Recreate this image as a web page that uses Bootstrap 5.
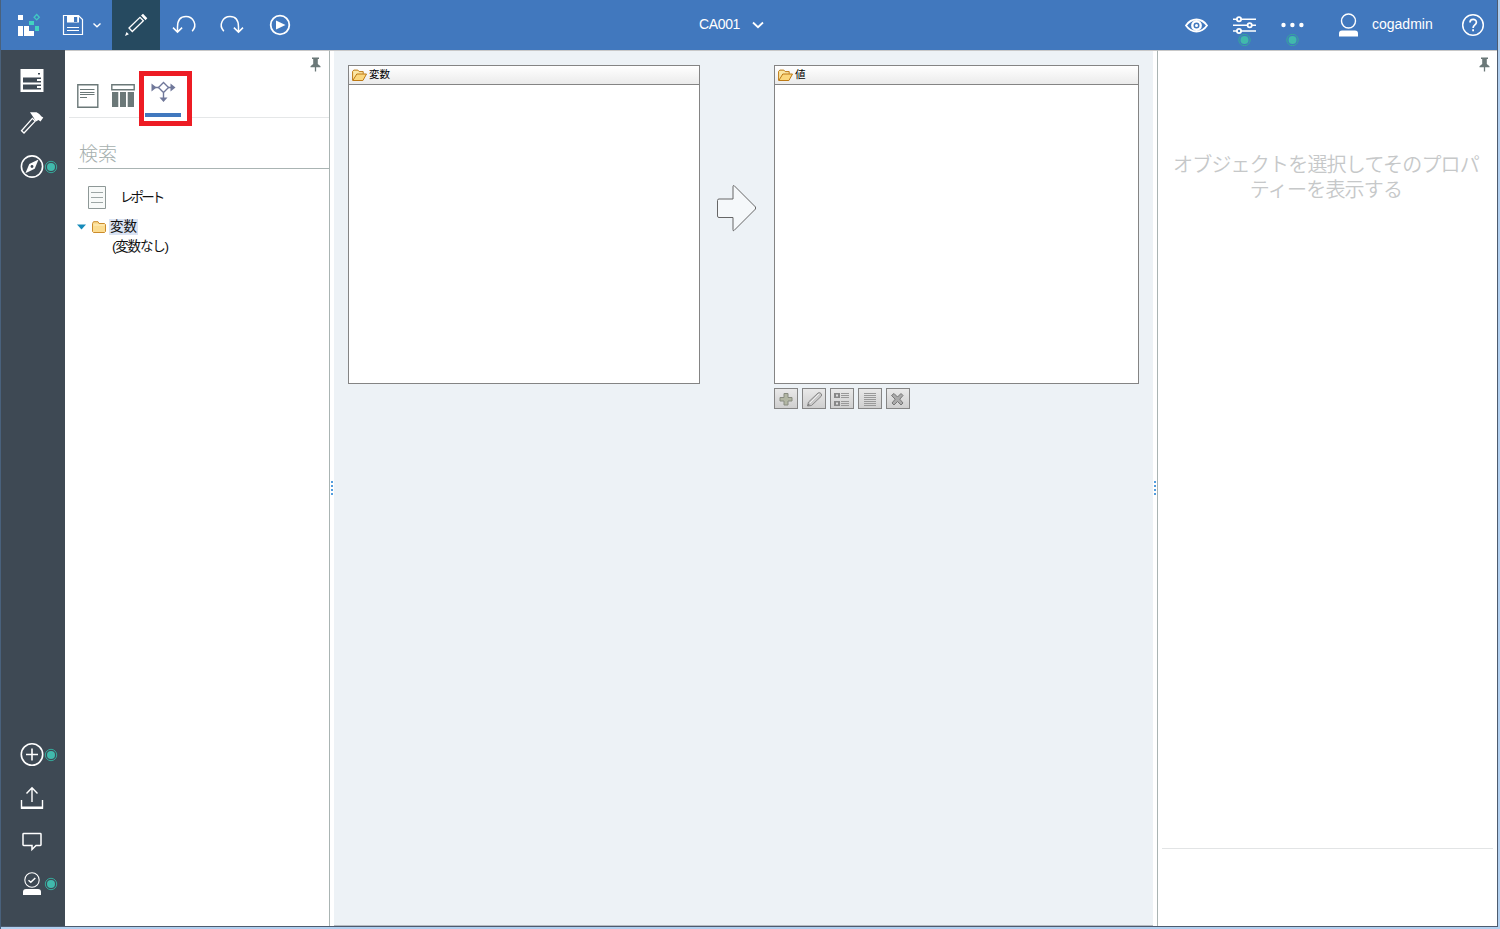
<!DOCTYPE html>
<html lang="ja">
<head>
<meta charset="utf-8">
<title>CA001</title>
<link href="https://cdn.jsdelivr.net/npm/bootstrap@5.3.0/dist/css/bootstrap.min.css" rel="stylesheet">
<style>
body{font-family:"Liberation Sans","Noto Sans CJK JP",sans-serif;font-size:14px;width:1500px;height:929px;overflow:hidden;background:#b2d0f0;border-left:1px solid #49617c;line-height:1.2}
svg{display:block;flex:none;fill:none}
.window{width:1497px;height:927px;border-right:1px solid #4e5b6e;border-bottom:1px solid #4e5b6e;background:#fff}
.topbar{height:50px;background:#4178be;color:#fff;flex:none}
.tool{width:48px;height:50px;flex:none;padding:0;border:0;background:none}
.tool.logo{width:47px}.tool.save{width:64px}
.tool.active{background:#264a60}
.rail{width:64px;padding:9px 0 21px;background:#3e4954;flex:none}
.side-left{width:265px;border-right:1px solid #aab4b3;border-top:1px solid #c8c8c8;flex:none}
.splitter{width:4px;border-top:1px solid #c8c8c8;flex:none}
.canvas-area{width:819px;background:#edf2f6;border-top:1px solid #c8c8c8;border-bottom:1px solid #b7bcc3;padding:14px 14px 0;flex:none}
.side-right{width:340px;border-left:1px solid #aab4b3;border-top:1px solid #c8c8c8;flex:none}
.tabs-row{height:47px;margin-left:4px;border-bottom:1px solid #e5e7e8;padding-left:8px}
.marked{width:53px;height:55px;border:5px solid #ed1c24;margin:0 0 0 4px;flex:none;background:#fff;position:relative;z-index:1}
.search{height:51px;margin-left:13px;border-bottom:1px solid #aab4b3;font-size:19px;font-weight:300;color:#a5afae;line-height:28px;padding:23px 0 0 1px}
.tree{color:#111;font-size:13.5px}
.picked{background:#dae3f3;height:16px;line-height:15px;width:29px;padding-left:1px}
.panel-box{height:319px;border:1px solid #848484;background:#fff}
.panel-head{height:19px;border-bottom:1px solid #848484;background:linear-gradient(#fff,#ebebeb);font-size:10.5px;line-height:16px;color:#000;padding-left:3px}
.mini{width:24px;height:21px;padding:0;border:1px solid #858585;background:linear-gradient(#e9e9e9,#cfcfcf)}
.hint{font-size:20px;font-weight:350;line-height:25px;color:#c6c8c9;letter-spacing:-.8px;margin:81px 3px 0 0;white-space:nowrap}
.footer-rule{height:1px;background:#e2e4e5;margin:0 4px 77px}
</style>
</head>
<body>
<svg width="0" height="0" class="position-absolute">
<defs>
<g id="dot"><circle r="5.7" stroke="#35a99b" stroke-width="1"/><circle r="4" fill="#41b9ac"/></g>
<g id="pin"><path d="M2 .5h7v1.500H7.800V7l2.700 2.300v1H.5v-1L3.200 7V2H2z" fill="#6b7878"/><path d="M5.500 10v4.500" stroke="#6b7878" stroke-width="1.3"/></g>
<g id="openfolder"><path d="M.6 11.4V2.4l1.2-1.3h4l1.4 1.5h4v2.2" fill="#fbe7a5" stroke="#bd7914"/><path d="M.8 11.5 4.8 5h9.7l-3.6 6.5z" fill="#fbd77d" stroke="#bd7914"/></g>
</defs>
</svg>
<div class="window d-flex flex-column">
<header class="topbar d-flex align-items-center">
<button class="tool logo"><svg width="47" height="50"><path d="M17 15h5v5h-5zM17 26h5v10h-5zM23 26h5v10h-5zM28 31h5v5h-5z" fill="#fff"/><path d="M28 21h5v4h-5zM34 26h4v5h-4z" fill="#42d3c1"/><path d="m35.7 14.5 2.6 2.7-2.6 2.7-2.6-2.7z" stroke="#42c8c4" stroke-width="1.3"/></svg></button>
<button class="tool save"><svg width="64" height="50"><path d="M15.5 15.5h15l4 4v15h-19z" stroke="#fff" stroke-width="1.2"/><path d="M19 15.5h12v7H19z" fill="#fff"/><path d="M26 17h3.2v5H26z" fill="#4178be"/><path d="M19 27.5h12M19 30.5h12" stroke="#fff"/><path d="m45.5 23.5 3.5 3.2 3.500-3.2" stroke="#fff" stroke-width="1.4"/></svg></button>
<button class="tool active"><svg width="48" height="50"><path d="m17 28 11-10.700 3.400 3.400L20.300 31.500z" stroke="#fff" stroke-width="1.3"/><path d="m29 15.500 2-1.700 4.300 4.500-1.800 2zM13 36l1.500-4 2.400 2.300z" fill="#fff"/></svg></button>
<button class="tool"><svg width="48" height="50"><path d="M32.200 31.200C38 25 33 16.500 26 16.500s-8.500 5-8.500 10.500v5M13 27.600l4.500 4.500 4.600-4.500" stroke="#fff" stroke-width="1.5"/></svg></button>
<button class="tool"><svg width="48" height="50"><path d="M15.800 31.200C10 25 15 16.500 22 16.500s8.500 5 8.500 10.500v5M25.900 27.600l4.600 4.500 4.500-4.500" stroke="#fff" stroke-width="1.5"/></svg></button>
<button class="tool"><svg width="48" height="50"><circle cx="24" cy="25" r="9.3" stroke="#fff" stroke-width="1.8"/><path d="m20 20.500 9.500 4.500-9.500 4.500z" fill="#fff"/></svg></button>
<div class="d-flex align-items-center flex-grow-1" style="padding-left:395px"><span class="pb-1" style="letter-spacing:-.35px;margin-top:2px">CA001</span><svg width="14" height="10" style="margin-left:11px"><path d="m2 2.500 5 4.700 5-4.700" stroke="#fff" stroke-width="1.8"/></svg></div>
<button class="tool"><svg width="48" height="50"><path d="M14 25.500c5.500-8 15.500-8 21 0-5.500 8-15.500 8-21 0z" stroke="#fff" stroke-width="1.8"/><circle cx="24.500" cy="25.500" r="4.200" stroke="#fff" stroke-width="2.400"/><circle cx="24.500" cy="25.500" r="1.500" fill="#fff"/></svg></button>
<button class="tool"><svg width="48" height="50"><path d="M13 19.200h23M13 25.200h23M13 31h23" stroke="#fff" stroke-width="1.4"/><g fill="#4178be" stroke="#fff" stroke-width="1.8"><circle cx="19" cy="19.200" r="2.100"/><circle cx="29.700" cy="25.200" r="2.100"/><circle cx="19" cy="31" r="2.100"/></g><use href="#dot" x="24.500" y="40"/></svg></button>
<button class="tool"><svg width="48" height="50"><g fill="#fff"><circle cx="15.500" cy="25" r="2.200"/><circle cx="24.400" cy="25" r="2.200"/><circle cx="33.400" cy="25" r="2.200"/></g><use href="#dot" x="24.500" y="40"/></svg></button>
<svg width="56" height="50"><circle cx="32.500" cy="21" r="7" stroke="#fff" stroke-width="1.4"/><path d="M23 36.500v-3q0-3 3-3h13q3 0 3 3v3z" fill="#fff"/></svg>
<span class="pb-1" style="width:77px;margin-top:2px">cogadmin</span>
<button class="tool"><svg width="48" height="50"><circle cx="24" cy="25" r="10.300" stroke="#fff" stroke-width="1.5"/><path d="M21 22.500c0-4 6.400-4 6.400-.3 0 2.700-3.300 2.700-3.300 5.800" stroke="#fff" stroke-width="1.7"/><path d="M23.200 29.300h1.800v2h-1.800z" fill="#fff"/></svg></button>
</header>
<div class="d-flex flex-grow-1">
<nav class="rail d-flex flex-column">
<svg width="64" height="43"><path d="M19.500 10h23v23h-23z" fill="#fff"/><path d="M22 18.500h18v5H22zM22 25.500h18v5H22z" fill="#3e4954"/><path d="M36 20h4v2h-4zM36 27h4v2h-4z" fill="#fff"/><path d="M37 14h2v1.500h-2z" fill="#3e4954"/></svg>
<svg width="64" height="43"><path d="m31.400 16.400 2.800 2.700L23 31l-2.500-2.300z" stroke="#fff" stroke-width="1.3"/><path d="M29 10.300h6.500c2.500 1 4 3 5 4.200l1.800 1-2.800 4-2-1.500-2.600 1.400-2.700-4.300z" fill="#fff"/></svg>
<svg width="64" height="43"><circle cx="31" cy="21.500" r="10.600" stroke="#fff" stroke-width="1.6"/><path d="m37.500 14.500-3.800 9.300-9.300 4.500 3.900-9.400z" fill="#fff"/><circle cx="31" cy="21.500" r="1.400" fill="#3e4954"/><use href="#dot" x="50" y="22"/></svg>
<svg width="64" height="43" class="mt-auto"><circle cx="31" cy="21.500" r="10.700" stroke="#fff" stroke-width="1.6"/><path d="M31 15.500v12M25 21.500h12" stroke="#fff" stroke-width="1.6"/><use href="#dot" x="50" y="22"/></svg>
<svg width="64" height="43"><path d="M31 26V11.800M25.500 17.500l5.500-5.800 5.500 5.800M20.500 24v8h21v-8" stroke="#fff" stroke-width="1.4"/><path d="M20 30.500h22v2.500H20z" fill="#fff"/></svg>
<svg width="64" height="43"><path d="M22.700 14.500h16.600q.7 0 .7.700v10.600q0 .7-.7.700h-4.300l-4 4v-4h-8.300q-.7 0-.7-.7V15.200q0-.7.7-.7z" stroke="#fff" stroke-width="1.5"/></svg>
<svg width="64" height="43"><circle cx="31" cy="18" r="7.200" stroke="#fff" stroke-width="1.1"/><path d="m27.500 18.300 2.300 2 4.500-4.300" stroke="#fff" stroke-width="1.5"/><path d="M22 33v-3q0-3 3-3h12q3 0 3 3v3z" fill="#fff"/><use href="#dot" x="50" y="22"/></svg>
</nav>
<aside class="side-left">
<div class="d-flex justify-content-end" style="height:20px;padding:6px 8px 0 0"><svg width="11" height="15"><use href="#pin"/></svg></div>
<div class="tabs-row d-flex">
<svg width="22" height="25" style="margin-top:12px"><path d="M.8 1.800h20v22.400H.8z" stroke="#6b7878" stroke-width="1.4"/><path d="M3 6.500h14.500M3 9.500h14.500M3 11.500h14.500M3 14.500h7" stroke="#6b7878" stroke-width="1"/></svg>
<svg width="24" height="25" style="margin:12px 0 0 12px"><path d="M.8 1.700h22.400v5H.8z" stroke="#6b7878" stroke-width="1.4"/><path d="M1 9h6.300v15H1zM9 9h6v15H9zM16.700 9h6.300v15h-6.300z" fill="#6b7878"/></svg>
<div class="marked"><svg width="43" height="45"><g stroke="#70789a" stroke-width="1.4"><path d="M10 11.500h5M24 11.500h5M19.500 17v6"/><path d="m19.500 6.500 5 5-5 5-5-5z"/></g><path d="m7.500 7.500 5 4-5 4zM26.500 7.500l5 4-5 4zM15.500 21.500h8l-4 4.500z" fill="#70789a"/><path d="M1 37h36v4H1z" fill="#4178be"/></svg></div>
</div>
<div class="search">検索</div>
<div class="tree">
<div class="d-flex align-items-center" style="height:24px;margin:16px 0 0 23px"><svg width="18" height="23"><path d="M.5.500h17v22H.5z" stroke="#8e9897" fill="#f8faf9"/><path d="M3 6.500h12M3 11.500h12M3 16.500h12" stroke="#9da6a5"/></svg><span style="margin:3px 0 0 14px;letter-spacing:-2.900px">レポート</span></div>
<div class="d-flex align-items-center" style="margin:10px 0 0 12px"><svg width="9" height="6"><path d="M0 .500h9L4.500 5.500z" fill="#168bba"/></svg><svg width="14" height="12" style="margin-left:6px"><path d="M.5 10.500v-8l1-1.800h4.500l1 1.800h5.500l1 1v7l-1 1h-11z" fill="#fbdc91" stroke="#cb8b2b"/><path d="M1.500 4h11" stroke="#fff0c4"/></svg><span class="picked" style="margin-left:3px">変数</span></div>
<div style="padding:4px 0 0 47px;letter-spacing:-1.200px">(変数なし)</div>
</div>
</aside>
<div class="splitter d-flex align-items-start justify-content-center"><svg width="2" height="14" style="margin-top:430px"><path d="M1 0v14" stroke="#529ddd" stroke-width="2" stroke-dasharray="2"/></svg></div>
<main class="canvas-area">
<div class="d-flex">
<section class="panel-box" style="width:352px"><div class="panel-head d-flex"><svg width="16" height="13" style="margin-top:3px"><use href="#openfolder"/></svg><span style="margin-left:1px">変数</span></div></section>
<svg width="40" height="47" style="margin:120px 17px 0"><path d="M2 14h14V1.500q0-1 1-1L38.500 22v2L17 45.500q-1 1-1-1V32.500H2q-1.500 0-1.500-1.500V15.500Q.5 14 2 14z" fill="#f5f8fa" stroke="#666"/></svg>
<section class="panel-box" style="width:365px"><div class="panel-head d-flex"><svg width="16" height="13" style="margin-top:3px"><use href="#openfolder"/></svg><span style="margin-left:1px">値</span></div></section>
</div>
<div class="d-flex gap-1" style="margin:4px 0 0 426px">
<button class="mini"><svg width="22" height="19"><path d="M9 4.500h4v4h4v3.500h-4v4H9v-4H5V8.500h4z" fill="#b2b6a3" stroke="#888c80"/></svg></button>
<button class="mini"><svg width="22" height="19"><path d="m4.500 17 1-4 9.500-9q1.500-1 3 .5t0 3L8.500 16.500z" fill="#c9c9c9" stroke="#888"/><path d="m7 14 9-9" stroke="#eee"/><path d="m4.500 17 .7-2.300L7 16z" fill="#777"/></svg></button>
<button class="mini"><svg width="22" height="19"><path d="M3 4h6v5H3zM3 12h6v5H3z" fill="#888"/><path d="M5 5.500h2v2H5zM5 13.500h2v2H5z" fill="#ddd"/><path d="M10 4.500h8M10 6.500h8M10 8.500h8M10 12.500h8M10 14.500h8M10 16.500h8" stroke="#999"/></svg></button>
<button class="mini"><svg width="22" height="19"><path d="M5 4.500h12M5 6.500h12M5 8.500h12M5 10.500h12M5 12.500h12M5 14.500h12M5 16.500h12" stroke="#999"/></svg></button>
<button class="mini"><svg width="22" height="19"><path d="m4.500 6.500 2.500-2L10.500 8 14 4.500l2 2-3.200 3.700L16 14l-2 2-3.500-3.500L7 16l-2-2 3.200-3.800z" fill="#aaa" stroke="#777"/></svg></button>
</div>
</main>
<div class="splitter d-flex align-items-start justify-content-center"><svg width="2" height="14" style="margin-top:430px"><path d="M1 0v14" stroke="#529ddd" stroke-width="2" stroke-dasharray="2"/></svg></div>
<aside class="side-right d-flex flex-column">
<div class="d-flex justify-content-end" style="height:21px;padding:6px 7px 0 0"><svg width="11" height="15"><use href="#pin"/></svg></div>
<div class="hint text-center">オブジェクトを選択してそのプロパ<br>ティーを表示する</div>
<div class="footer-rule mt-auto"></div>
</aside>
</div>
</div>
<script src="https://cdn.jsdelivr.net/npm/bootstrap@5.3.0/dist/js/bootstrap.bundle.min.js"></script>
</body>
</html>
